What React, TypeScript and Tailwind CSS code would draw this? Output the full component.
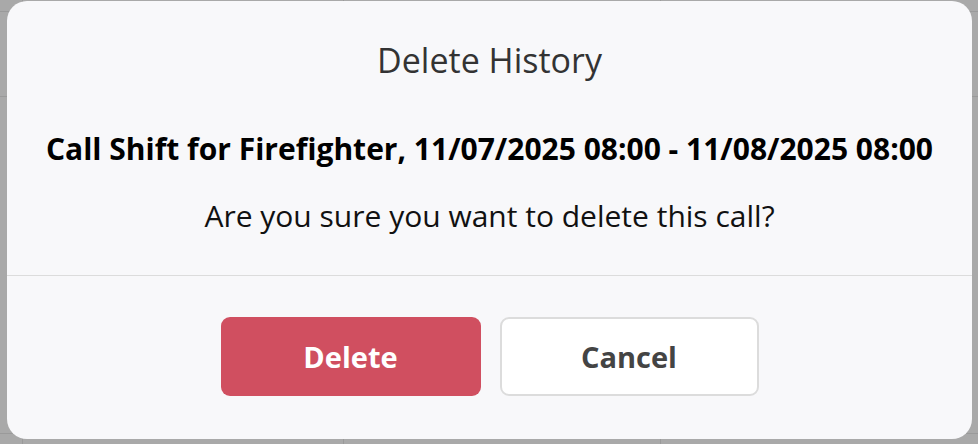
export default function App() {
  return (
    <div className="relative w-[978px] h-[444px] bg-[#a9a9a9] overflow-hidden" style={{ fontFamily: '"Open Sans", sans-serif' }}>
      <div className="absolute left-0 top-[11px] w-full h-[1px] bg-[#9a9a9a]" />
      <div className="absolute left-0 top-[96px] w-full h-[1px] bg-[#9a9a9a]" />
      <div className="absolute left-0 top-[433px] w-full h-[1px] bg-[#9a9a9a]" />
      <div className="absolute left-[22px] top-0 w-[1px] h-full bg-[#9a9a9a]" />
      <div className="absolute left-[343px] top-0 w-[1px] h-full bg-[#9a9a9a]" />
      <div className="absolute left-[660px] top-0 w-[1px] h-full bg-[#9a9a9a]" />
      <div className="relative ml-[7px] mt-[1px] w-[965px] h-[438px] rounded-[20px] bg-[#f8f8fa] flex flex-col">
        <div className="h-[274px] flex flex-col items-center">
          <div className="mt-[36px] text-[34px] leading-[46px] text-[#333]">Delete History</div>
          <div className="mt-[46px] text-[30px] leading-[40px] font-bold text-black whitespace-nowrap">
            Call Shift for Firefighter, 11/07/2025 08:00 - 11/08/2025 08:00
          </div>
          <div className="mt-[27px] text-[30px] leading-[40px] text-[#111]">Are you sure you want to delete this call?</div>
        </div>
        <div className="h-[1px] bg-[#dcdcdc]" />
        <div className="flex justify-center gap-[19px] mt-[41px]">
          <button className="w-[260px] h-[79px] rounded-[9px] bg-[#d04f60] text-white text-[29px] font-bold">Delete</button>
          <button className="w-[259px] h-[79px] rounded-[9px] bg-white border-2 border-[#dcdcdc] text-[#444] text-[29px] font-bold">Cancel</button>
        </div>
      </div>
    </div>
  );
}
